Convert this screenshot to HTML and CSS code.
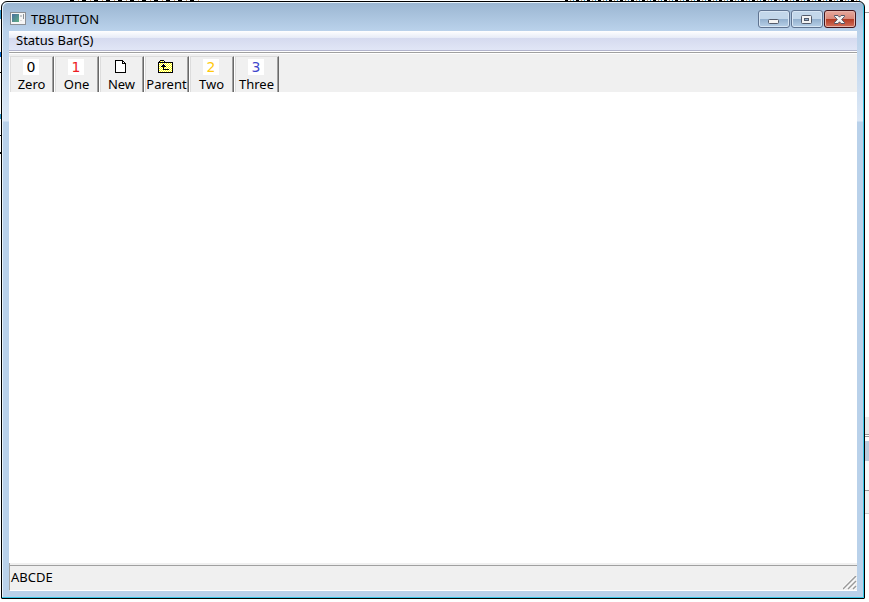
FILE: index.html
```html
<!doctype html>
<html lang="en">
<head>
    <meta charset="utf-8">
    <meta name="viewport" content="width=device-width, initial-scale=1">
    <title>TBBUTTON</title>
    <link rel="stylesheet" href="styles.css">
</head>
<body>
<div class="window">
    <header class="titlebar">
        <svg class="app-icon" width="16" height="14" viewBox="0 0 16 14" shape-rendering="crispEdges" aria-hidden="true">
            <defs>
                <linearGradient id="pane" x1="0" y1="0" x2="1" y2="1">
                    <stop offset="0" stop-color="#4a6fa0"/>
                    <stop offset="1" stop-color="#5fae84"/>
                </linearGradient>
            </defs>
            <rect x="0" y="0" width="16" height="13" fill="#8b8f94"/>
            <rect x="1" y="1" width="14" height="11" fill="#f6f6f6"/>
            <rect x="2" y="2" width="7" height="8" fill="url(#pane)"/>
            <rect x="10" y="3" width="2" height="2" fill="#c4c8cc"/>
            <rect x="13" y="2" width="1" height="5" fill="#8a9298"/>
            <rect x="10" y="8" width="2" height="1" fill="#d8d8d8"/>
        </svg>
        <h1 class="title">TBBUTTON</h1>
        <div class="controls">
            <button class="control" type="button" aria-label="Minimize">
                <svg width="29" height="15" viewBox="0 0 29 15">
                    <rect x="9.5" y="7.5" width="10" height="4" rx="1" fill="#f4f4f4" stroke="#535b6b"/>
                </svg>
            </button>
            <button class="control" type="button" aria-label="Maximize">
                <svg width="29" height="15" viewBox="0 0 29 15">
                    <rect x="9.5" y="3.5" width="10" height="8" rx="1" fill="#f4f4f4" stroke="#535b6b"/>
                    <rect x="12.5" y="6.5" width="4" height="2" fill="#92b0cf" stroke="#535b6b"/>
                </svg>
            </button>
            <button class="control close" type="button" aria-label="Close">
                <svg width="29" height="15" viewBox="0 0 29 15">
                    <path d="M9.5 3.5h3.5l1.5 1.700 1.5-1.700h3.500v1l-2.800 3 2.800 3v1h-3.500l-1.500-1.700-1.500 1.700H9.500v-1l2.800-3-2.800-3z" fill="#f4f4f4" stroke="#535666"/>
                </svg>
            </button>
        </div>
    </header>
    <div class="client">
        <nav class="menubar">
            <button class="menu" type="button">Status Bar(S)</button>
        </nav>
        <div class="toolbar" role="toolbar" aria-label="Tools">
            <button class="tool" type="button"><span class="glyph zero">0</span>Zero</button>
            <button class="tool" type="button"><span class="glyph one">1</span>One</button>
            <button class="tool" type="button">
                <svg class="picture" width="16" height="16" viewBox="0 0 16 16" shape-rendering="crispEdges" aria-hidden="true">
                    <path d="M2 1h8v1h1v1h1v1h1v10H2z" fill="#000"/>
                    <path d="M3 2h6v3h3v8H3z" fill="#fff"/>
                    <path d="M10 3h1v1h-1z" fill="#fff"/>
                </svg>
                New
            </button>
            <button class="tool" type="button">
                <svg class="picture" width="16" height="16" viewBox="0 0 16 16" shape-rendering="crispEdges" aria-hidden="true">
                    <defs>
                        <pattern id="dither" width="2" height="2" patternUnits="userSpaceOnUse">
                            <rect width="2" height="2" fill="#fff"/>
                            <rect width="1" height="1" fill="#ff0"/>
                            <rect x="1" y="1" width="1" height="1" fill="#ff0"/>
                        </pattern>
                    </defs>
                    <path d="M2 1h4v1h1v1h8v11H0V3h1V2h1z" fill="#000"/>
                    <path d="M2 2h4v1H2zM1 4h13v9H1z" fill="url(#dither)"/>
                    <path d="M5 5h1v1h1v1h1v1H6v2h5v1H5V8H3V7h1V6h1z" fill="#000"/>
                </svg>
                Parent
            </button>
            <button class="tool" type="button"><span class="glyph two">2</span>Two</button>
            <button class="tool" type="button"><span class="glyph three">3</span>Three</button>
        </div>
        <main class="content"></main>
        <footer class="statusbar">
            <span>ABCDE</span>
            <svg class="grip" width="14" height="14" viewBox="0 0 14 14" aria-hidden="true">
                <path d="M0 13L13 0M5 13l8-8M10 13l3-3" stroke="#fff" stroke-width="3"/>
                <path d="M0 13L13 0M5 13l8-8M10 13l3-3" stroke="#999" stroke-width="1.5"/>
            </svg>
        </footer>
    </div>
</div>
</body>
</html>
```

FILE: styles.css
```css
* {
    box-sizing: border-box;
}

/* strips of the windows behind show at the edges */
body {
    margin: 0;
    height: 100vh;
    padding: 1px 4px 3px 1px;
    display: flex;
    font-family: "Noto Sans", "DejaVu Sans", sans-serif;
    font-size: 13px;
    color: #000;
    background:
        repeating-linear-gradient(90deg, #000 0 3px, #fff 3px 5px, #b96 5px 6px, #fff 6px 8px, #39c 8px 9px, #fff 9px 11px) 565px 0 / 295px 1px no-repeat,
        repeating-linear-gradient(90deg, #000 0 4px, #fff 4px 8px, #c96 8px 9px, #fff 9px 12px) 70px 0 / 132px 1px no-repeat,
        linear-gradient(#fff 12px, #999 12px 13px, #fff 13px 417px, #eaeaea 417px 434px, #999 434px 435px, #fff 435px 436px, #999 436px 437px, #fff 437px 441px, #bccbdc 441px 461px, #fafafa 461px 490px, #999 490px 491px, #f2f2f2 491px 513px, #ccc 513px 514px, #fff 514px) 100% 0 / 4px 100% no-repeat,
        linear-gradient(#fff 10px, #39c 10px 19px, #fff 19px 52px, #06c 52px 57px, #fff 57px 72px, #000 72px 73px, #fff 73px 114px, #39c 114px 119px, #fff 119px 135px, #000 135px 136px, #fff 136px 152px, #000 152px 154px, #fff 154px) 0 0 / 1px 100% no-repeat,
        #fff;
}

.window {
    flex: 1;
    min-width: 0;
    display: flex;
    flex-direction: column;
    padding: 1px 7px 7px;
    border: 1px solid #000;
    border-radius: 6px 6px 1px 1px;
    background: linear-gradient(#9ab5d1, #b9d1ea 28px, #dce8f6 119px, #b9d1ea 120px);
    box-shadow: inset -1px -1px #35c6e6, inset 1px 1px #e8f3fb;
}

.titlebar {
    display: flex;
    align-items: center;
    height: 28px;
    padding: 4px 1px 0;
}

.title {
    flex: 1;
    margin: 0 0 0 5px;
    font-size: 13px;
    font-weight: 400;
}

.controls {
    display: flex;
    gap: 1px;
}

.control {
    width: 32px;
    height: 18px;
    padding: 0;
    border: 1px solid #5f7390;
    border-radius: 3px;
    background: linear-gradient(#c3d7ea 8px, #92afcd 8px, #b7d0e8);
    box-shadow: inset 0 0 0 1px #d8e6f4;
}

.control svg {
    display: block;
}

.close {
    border-color: #43141a;
    background: linear-gradient(#e7a89d, #d98878 8px, #b23a22 8px, #d3705c);
    box-shadow: inset 0 0 0 1px #e6b4aa;
}

.client {
    flex: 1;
    display: flex;
    flex-direction: column;
    background: #fff;
}

.menubar {
    height: 20px;
    border-bottom: 1px solid #b2b4cc;
    background: linear-gradient(#fff, #e6ebf7 7px, #d5daef 7px, #e1e6f6);
}

.menu {
    height: 19px;
    padding: 0 7px;
    border: 0;
    background: none;
    font: inherit;
    line-height: 19px;
}

.toolbar {
    display: flex;
    height: 40px;
    margin-top: 1px;
    padding-top: 3px;
    border-top: 1px solid #a0a0a0;
    background: linear-gradient(#fff 1px, #f0f0f0 1px);
}

.tool {
    display: flex;
    flex-direction: column;
    align-items: center;
    width: 45px;
    padding: 2px 0 0;
    border: solid;
    border-width: 1px 1px 0;
    border-color: #dcdcdc #696969 #dcdcdc #fff;
    background: #f0f0f0;
    box-shadow: inset 1px 0 #dcdcdc, inset -1px 0 #a0a0a0;
    font: inherit;
    line-height: 19px;
    white-space: nowrap;
}

.glyph,
.picture {
    display: block;
    flex: none;
    width: 16px;
    height: 16px;
    margin-right: 1px;
}

.glyph {
    background: #fff;
    font-family: "DejaVu Sans", sans-serif;
    font-size: 14px;
    line-height: 16px;
    text-align: center;
}

.one {
    color: #ed1c24;
}

.two {
    color: #ffc90e;
}

.three {
    color: #3f48cc;
}

.content {
    flex: 1;
}

.statusbar {
    display: flex;
    align-items: center;
    justify-content: space-between;
    height: 28px;
    padding: 0 0 0 1px;
    border-bottom: 1px solid #fff;
    border-left: 1px solid #a0a0a0;
    background: linear-gradient(#f0f0f0 2px, #a0a0a0 2px 3px, #f0f0f0 3px);
}

.grip {
    align-self: flex-end;
}
```
